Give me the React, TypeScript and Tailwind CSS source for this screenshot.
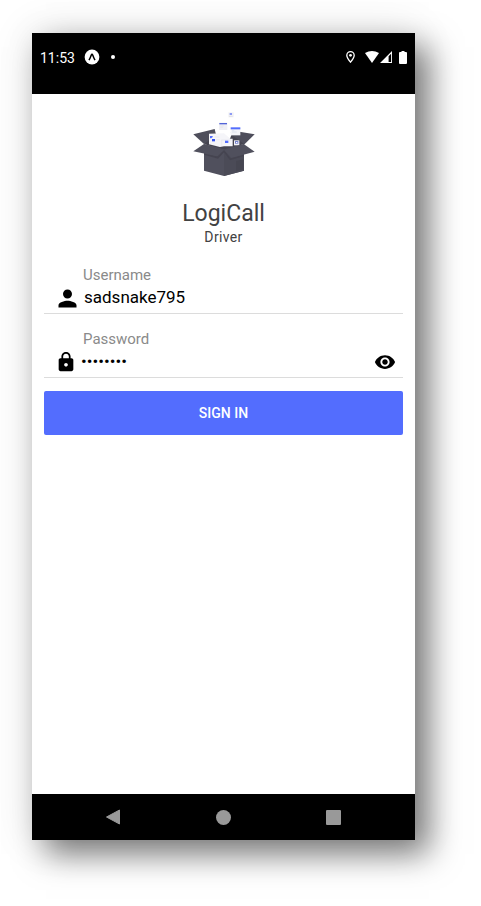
import { useState } from "react";
import { MdLock, MdPerson, MdVisibility } from "react-icons/md";

function StatusBar() {
  return (
    <header className="flex h-[61px] items-start justify-between bg-black px-2 pt-4 text-white">
      <div className="flex h-4 items-center">
        <span className="mt-px w-9 text-sm leading-4">11:53</span>
        <svg className="ml-2 size-4" viewBox="0 0 16 16" aria-hidden="true">
          <circle cx="8" cy="8" r="7.4" fill="#fff" />
          <path d="M5 11.2Q6.2 9 7.2 6.2Q8 4.4 8.8 6.2Q9.8 9 11 11.2" fill="none" stroke="#000" strokeWidth="1.5" />
        </svg>
        <span className="ml-[11px] size-1 rounded-full bg-white" />
      </div>
      <div className="flex h-4 items-center">
        <svg className="h-3 w-[9px]" viewBox="0 0 9 12" aria-hidden="true">
          <path d="M4.5 11.2C2.6 8.8.8 6.5.8 4.4a3.7 3.7 0 0 1 7.4 0c0 2.1-1.8 4.4-3.7 6.8Z" fill="none" stroke="#fff" strokeWidth="1.3" />
          <circle cx="4.5" cy="4.3" r="1.4" fill="#fff" />
        </svg>
        <svg className="ml-[10px] h-3 w-[14px]" viewBox="0 0 14 12" aria-hidden="true">
          <path d="M0 2.1Q7-2 14 2.1L7 12Z" fill="#fff" />
        </svg>
        <svg className="ml-px h-3 w-3" viewBox="0 0 12 12" aria-hidden="true">
          <path d="M12 0v12H0Zm-.9 2.7L8.6 5.2v5.9h2.5Z" fill="#fff" fillRule="evenodd" />
        </svg>
        <svg className="ml-[7px] h-[13px] w-2" viewBox="0 0 8 13" aria-hidden="true">
          <path d="M2.5 0h3v1H7q1 0 1 1v10q0 1-1 1H1q-1 0-1-1V2q0-1 1-1h1.5Z" fill="#fff" />
        </svg>
      </div>
    </header>
  );
}

function BoxLogo() {
  return (
    <svg className="h-[68px] w-16" viewBox="36 30 192 204" role="img" aria-label="Open box with documents">
      <path d="M40 103 104 87 132 115 72 132Z" fill="#4e4e5b" />
      <path d="M224 103 160 92 132 115 192 134Z" fill="#4e4e5b" />
      <path d="M72 132 104 108h56l32 24-60 20Z" fill="#454450" />
      <g>
        <path d="M145 37h16v15h-16Z" fill="#f1f1f4" />
        <path d="M149 39h7v6h-7Z" fill="#8d9af5" />
        <path d="M147 48h11v1h-11Z" fill="#c9c9d4" />
        <path d="M104 88 118 82 156 100 150 116 110 112Z" fill="#fff" />
        <path d="M117 68h25v22h-25Z" fill="#f0f0f5" />
        <path d="M118 69h23v4h-23Z" fill="#5365d8" />
        <path d="M121 78h10M121 82h8" stroke="#d4d4df" />
        <path d="M152 82h29v24h-29Z" fill="#f4f4f8" />
        <path d="M152 82h29v6h-29Z" fill="#536dfe" />
        <path d="M156 92h7M156 96h14" stroke="#d5dceb" strokeWidth="2" />
        <path d="M87 101 132 100 151 116 158 116v23h-26l-12 2-33-8Z" fill="#f5f5f9" />
        <path d="M90 108h8v3l-4 4h-4Z" fill="#536dfe" />
        <path d="M96 117h9v7h-9Z" fill="#3552ee" />
        <path d="M107 119h12M104 111h14M125 120v16M124 120h31" stroke="#d8d8e4" />
        <path d="M135 122h10v7h-10Z" fill="#536dfe" />
        <path d="M162 121h16v15h-16Z" fill="#f1f1f6" />
        <path d="M165 123h10v8h-10Z" fill="#7380cc" />
        <path d="M168 126h4v3h-4Z" fill="#fff" />
      </g>
      <path d="M72 133 132 148 192 133V212L132 228 72 212Z" fill="#50505d" />
      <path d="M132 148 192 133V212L132 228Z" fill="#4b4b57" />
      <path d="M72 158 113 169 132 150 151 174 192 162v6l-42 13-18-24-18 19-42-12Z" fill="#454450" />
      <path d="M72 132 132 149 110 169 40 154Z" fill="#50505d" />
      <path d="M192 133 132 149 154 174 224 155Z" fill="#50505d" />
      <path d="M168 183 190 178v30l-22 6Z" fill="#464651" />
    </svg>
  );
}

function NavigationBar() {
  return (
    <nav className="grid h-[46px] grid-cols-3 items-center bg-black px-[26px]" aria-label="System navigation">
      <button type="button" aria-label="Back" className="flex justify-center">
        <svg className="size-4" viewBox="0 0 16 16" aria-hidden="true">
          <path d="M14.5 1v14L1.5 8Z" fill="#999" stroke="#999" strokeLinejoin="round" />
        </svg>
      </button>
      <button type="button" aria-label="Home" className="flex justify-center">
        <span className="size-[15px] rounded-full bg-[#999]" />
      </button>
      <button type="button" aria-label="Recent apps" className="flex justify-center">
        <span className="size-[15px] rounded-[1px] bg-[#999]" />
      </button>
    </nav>
  );
}

export default function App() {
  const [username, setUsername] = useState("sadsnake795");
  const [password, setPassword] = useState("drive795");
  const [visible, setVisible] = useState(false);

  return (
    <div className="flex min-h-screen bg-white pt-[33px] pr-[66px] pb-[66px] pl-8 font-['Roboto',sans-serif]">
      <div className="flex min-w-0 flex-1 flex-col bg-white shadow-[14px_14px_30px_rgba(0,0,0,0.5),0_0_40px_rgba(0,0,0,0.12)]">
        <StatusBar />
        <main className="flex flex-1 flex-col px-3 pt-4">
          <div className="flex flex-col items-center">
            <BoxLogo />
            <h1 className="mt-[22px] text-[23px] leading-7 text-[#424242]">LogiCall</h1>
            <p className="text-sm leading-[18px] tracking-wide text-[#424242]">Driver</p>
          </div>
          <form className="mt-[19px] flex flex-col" onSubmit={(event) => event.preventDefault()}>
            <div className="h-[49px] border-b border-[#dcdcdc]">
              <label htmlFor="username" className="ml-[39px] block text-[15px] leading-5 text-[#8a8a8a]">Username</label>
              <div className="flex h-6 items-center">
                <MdPerson className="mt-0.5 ml-[10px] size-[27px] shrink-0" aria-hidden="true" />
                <input
                  id="username"
                  className="ml-[3px] min-w-0 flex-1 text-[17px] leading-6 text-black outline-none"
                  value={username}
                  onChange={(event) => setUsername(event.target.value)}
                />
              </div>
            </div>
            <div className="mt-[15px] h-[49px] border-b border-[#dcdcdc]">
              <label htmlFor="password" className="ml-[39px] block text-[15px] leading-5 text-[#8a8a8a]">Password</label>
              <div className="flex h-6 items-center">
                <MdLock className="mt-0.5 ml-[11px] size-[22px] shrink-0" aria-hidden="true" />
                <input
                  id="password"
                  type={visible ? "text" : "password"}
                  className="ml-[4px] min-w-0 flex-1 text-[17px] leading-6 text-black outline-none"
                  value={password}
                  onChange={(event) => setPassword(event.target.value)}
                />
                <button type="button" aria-label="Show password" className="mt-0.5 mr-[7px]" onClick={() => setVisible(!visible)}>
                  <MdVisibility className="size-[22px]" />
                </button>
              </div>
            </div>
            <button type="submit" className="mt-[13px] h-11 rounded-[2px] bg-[#536dfe] text-sm font-medium text-white">
              SIGN IN
            </button>
          </form>
        </main>
        <NavigationBar />
      </div>
    </div>
  );
}
